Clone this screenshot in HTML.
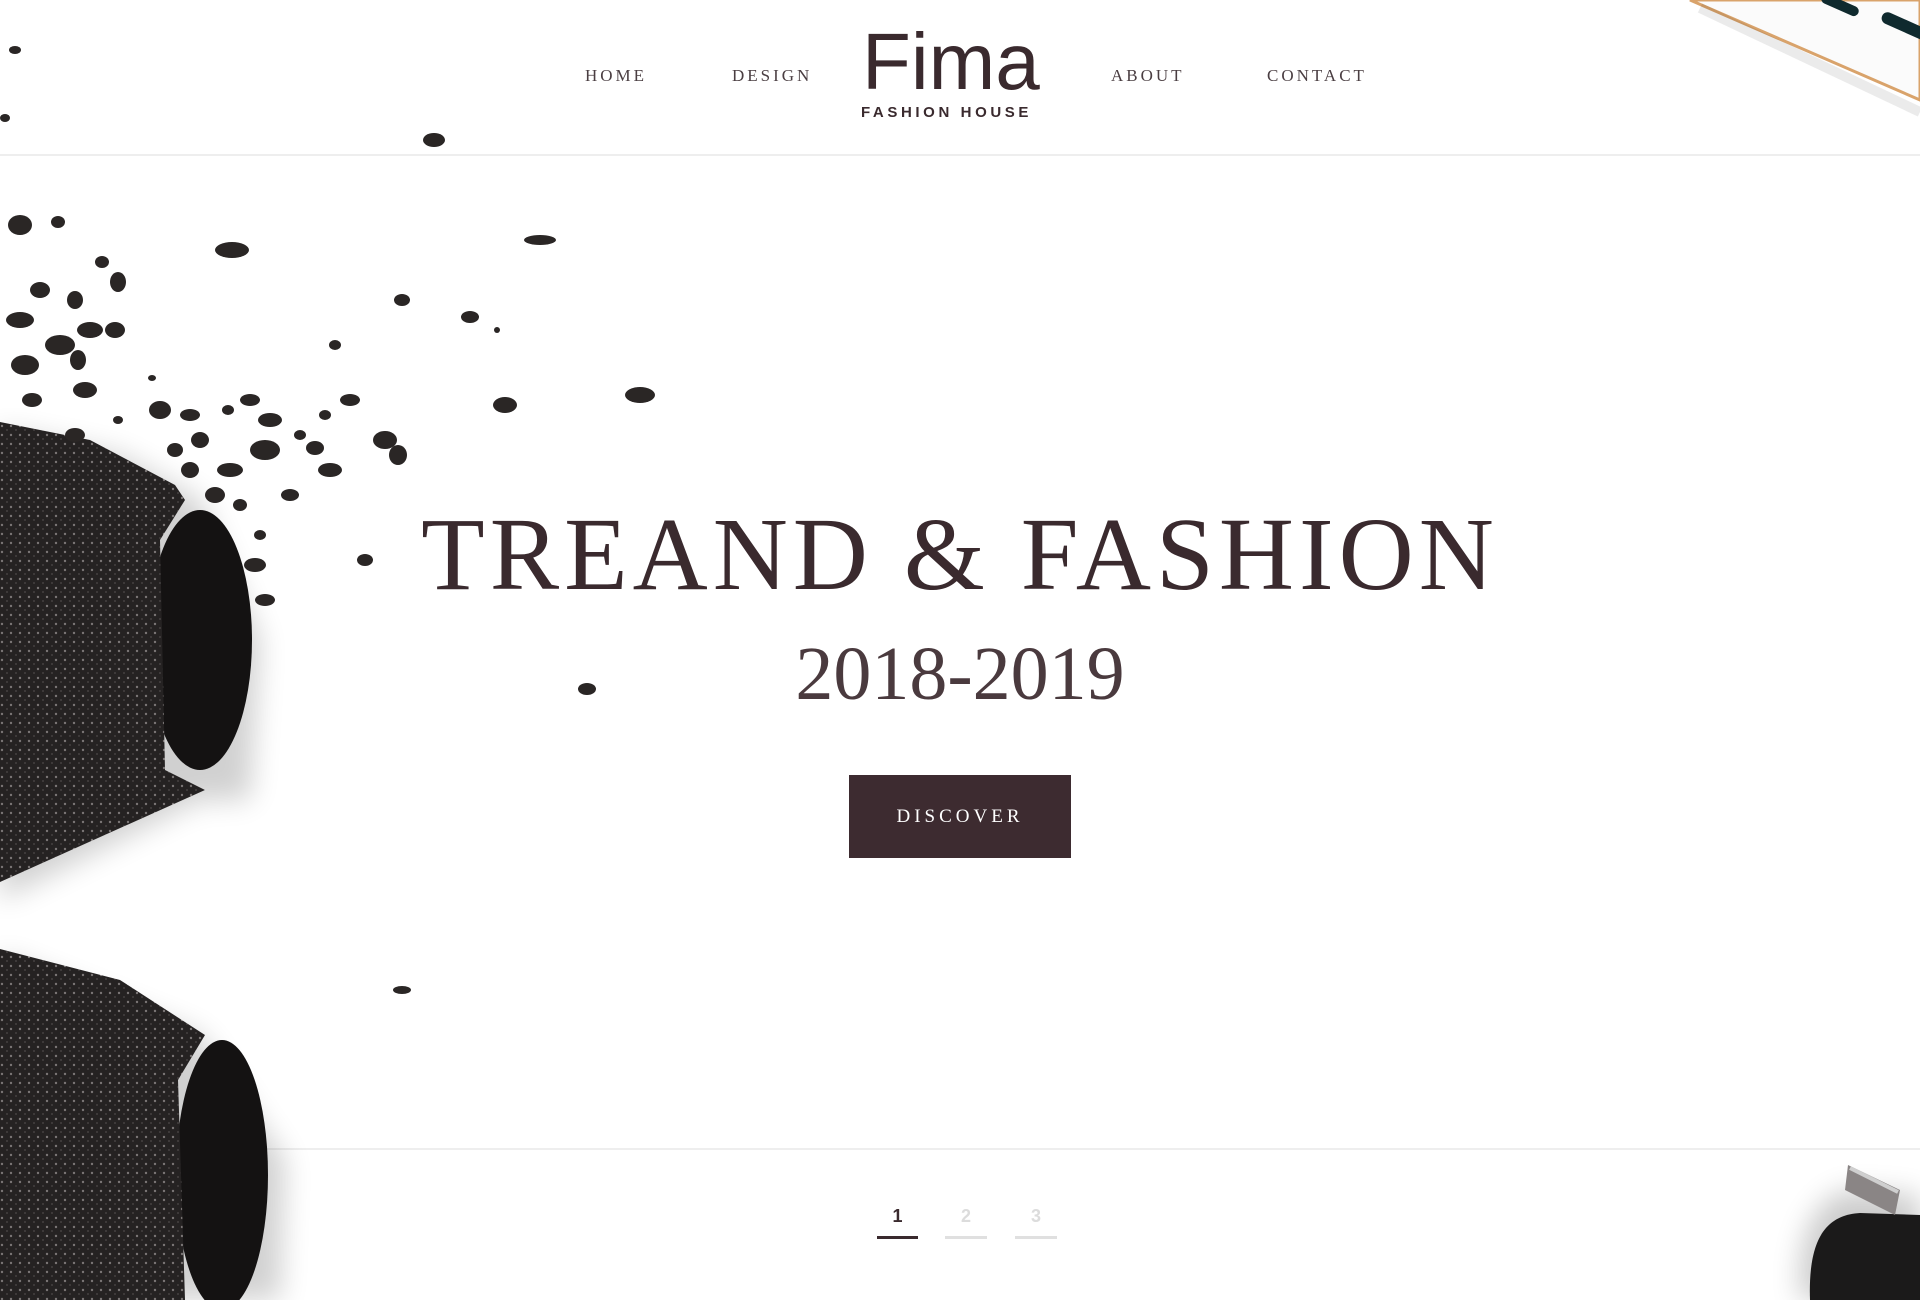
<!DOCTYPE html>
<html><head><meta charset="utf-8"><style>
html,body{margin:0;padding:0;background:#fff;}
body{width:1920px;height:1300px;position:relative;overflow:hidden;font-family:"Liberation Serif",serif;color:#3a2a2e;}
.nav{position:absolute;top:66px;font-size:17px;letter-spacing:3px;color:#4a3e42;}
.line{position:absolute;left:0;width:1920px;height:2px;background:#eeeeee;}
</style></head><body>
<div class="line" style="top:154px"></div>
<div class="line" style="top:1148px"></div>
<svg width="1920" height="1300" style="position:absolute;left:0;top:0">
<defs>
<filter id="sh" x="-50%" y="-50%" width="200%" height="200%"><feGaussianBlur stdDeviation="14"/></filter>
<pattern id="gl" width="9" height="9" patternUnits="userSpaceOnUse"><rect width="9" height="9" fill="#252222"/><circle cx="2" cy="3" r="1.2" fill="#7a7575"/><circle cx="7" cy="7" r="0.9" fill="#4e4a4a"/></pattern>
</defs>
<path d="M0,430 L120,455 L200,500 L260,640 L250,800 L200,800 L0,900Z" fill="#000" opacity=".18" filter="url(#sh)"/>
<path d="M0,955 L200,1035 L285,1160 L280,1300 L0,1300Z" fill="#000" opacity=".18" filter="url(#sh)"/>
<ellipse cx="200" cy="640" rx="52" ry="130" fill="#141212"/>
<path d="M0,422 L90,440 L175,485 L185,500 L160,540 L165,770 L205,790 L0,882Z" fill="url(#gl)"/>
<ellipse cx="222" cy="1175" rx="46" ry="135" fill="#141212"/>
<path d="M0,949 L120,980 L205,1035 L178,1080 L185,1300 L0,1300Z" fill="url(#gl)"/>
<g fill="#2a2625">
<ellipse cx="15" cy="50" rx="6" ry="4"/><ellipse cx="5" cy="118" rx="5" ry="4"/><ellipse cx="434" cy="140" rx="11" ry="7"/>
<ellipse cx="20" cy="225" rx="12" ry="10"/><ellipse cx="58" cy="222" rx="7" ry="6"/><ellipse cx="232" cy="250" rx="17" ry="8"/>
<ellipse cx="102" cy="262" rx="7" ry="6"/><ellipse cx="118" cy="282" rx="8" ry="10"/><ellipse cx="75" cy="300" rx="8" ry="9"/>
<ellipse cx="40" cy="290" rx="10" ry="8"/><ellipse cx="20" cy="320" rx="14" ry="8"/><ellipse cx="90" cy="330" rx="13" ry="8"/>
<ellipse cx="115" cy="330" rx="10" ry="8"/><ellipse cx="60" cy="345" rx="15" ry="10"/><ellipse cx="25" cy="365" rx="14" ry="10"/>
<ellipse cx="78" cy="360" rx="8" ry="10"/><ellipse cx="85" cy="390" rx="12" ry="8"/><ellipse cx="32" cy="400" rx="10" ry="7"/>
<ellipse cx="75" cy="435" rx="10" ry="7"/><ellipse cx="118" cy="420" rx="5" ry="4"/><ellipse cx="160" cy="410" rx="11" ry="9"/>
<ellipse cx="190" cy="415" rx="10" ry="6"/><ellipse cx="200" cy="440" rx="9" ry="8"/><ellipse cx="228" cy="410" rx="6" ry="5"/>
<ellipse cx="250" cy="400" rx="10" ry="6"/><ellipse cx="270" cy="420" rx="12" ry="7"/><ellipse cx="265" cy="450" rx="15" ry="10"/>
<ellipse cx="300" cy="435" rx="6" ry="5"/><ellipse cx="325" cy="415" rx="6" ry="5"/><ellipse cx="315" cy="448" rx="9" ry="7"/>
<ellipse cx="350" cy="400" rx="10" ry="6"/><ellipse cx="385" cy="440" rx="12" ry="9"/><ellipse cx="330" cy="470" rx="12" ry="7"/>
<ellipse cx="230" cy="470" rx="13" ry="7"/><ellipse cx="215" cy="495" rx="10" ry="8"/><ellipse cx="240" cy="505" rx="7" ry="6"/>
<ellipse cx="290" cy="495" rx="9" ry="6"/><ellipse cx="255" cy="565" rx="11" ry="7"/><ellipse cx="365" cy="560" rx="8" ry="6"/>
<ellipse cx="190" cy="470" rx="9" ry="8"/><ellipse cx="175" cy="450" rx="8" ry="7"/><ellipse cx="260" cy="535" rx="6" ry="5"/>
<ellipse cx="398" cy="455" rx="9" ry="10"/><ellipse cx="335" cy="345" rx="6" ry="5"/><ellipse cx="402" cy="300" rx="8" ry="6"/>
<ellipse cx="470" cy="317" rx="9" ry="6"/><ellipse cx="505" cy="405" rx="12" ry="8"/><ellipse cx="640" cy="395" rx="15" ry="8"/>
<ellipse cx="540" cy="240" rx="16" ry="5"/><ellipse cx="265" cy="600" rx="10" ry="6"/><ellipse cx="587" cy="689" rx="9" ry="6"/>
<ellipse cx="402" cy="990" rx="9" ry="4"/><ellipse cx="497" cy="330" rx="3" ry="3"/><ellipse cx="152" cy="378" rx="4" ry="3"/>
</g>
<path d="M1690,0 L1920,100 L1920,0Z" fill="#fbfbfb" stroke="#d9a36b" stroke-width="3"/>
<path d="M1700,8 L1920,112" stroke="#000" stroke-opacity=".08" stroke-width="10" fill="none"/>
<rect x="1820" y="0" width="40" height="10" rx="5" fill="#0f2a2e" transform="rotate(24 1840 5)"/>
<rect x="1880" y="20" width="50" height="12" rx="6" fill="#0f2a2e" transform="rotate(24 1905 26)"/>
<path d="M1800,1300 C1795,1230 1820,1195 1850,1190 L1920,1195 L1920,1300Z" fill="#000" opacity=".2" filter="url(#sh)"/>
<path d="M1810,1300 C1808,1240 1825,1215 1860,1213 L1920,1215 L1920,1300Z" fill="#1b1a1a"/>
<path d="M1848,1165 L1900,1190 L1895,1215 L1845,1190Z" fill="#8a8585"/>
<path d="M1850,1168 L1898,1192" stroke="#cfcfcf" stroke-width="4"/>
</svg>

<div class="nav" style="left:585px">HOME</div>
<div class="nav" style="left:732px">DESIGN</div>
<div class="nav" style="left:1111px">ABOUT</div>
<div class="nav" style="left:1267px">CONTACT</div>
<div style="position:absolute;left:862px;top:22px;font-family:'Liberation Sans',sans-serif;font-size:80px;color:#3a2a2e;letter-spacing:0px;line-height:1">Fima</div>
<div style="position:absolute;left:861px;top:104px;font-family:'Liberation Sans',sans-serif;font-size:15px;font-weight:bold;letter-spacing:3.6px;color:#3a2a2e">FASHION HOUSE</div>

<div style="position:absolute;left:0;width:1920px;top:503px;text-align:center;font-size:104px;letter-spacing:5px;line-height:1;color:#3a2a2e">TREAND &amp; FASHION</div>
<div style="position:absolute;left:0;width:1920px;top:636px;text-align:center;font-size:76px;color:#4a3a3e;line-height:1">2018-2019</div>
<div style="position:absolute;left:849px;top:775px;width:222px;height:83px;background:#3d2b30;color:#fff;font-size:19px;letter-spacing:4px;text-align:center;line-height:83px">DISCOVER</div>

<div style="position:absolute;left:877px;top:1206px;width:41px;text-align:center;font-family:'Liberation Sans',sans-serif;font-weight:bold;font-size:18px;color:#3a2a2e">1</div>
<div style="position:absolute;left:945px;top:1206px;width:42px;text-align:center;font-family:'Liberation Sans',sans-serif;font-weight:bold;font-size:18px;color:#dcdcdc">2</div>
<div style="position:absolute;left:1015px;top:1206px;width:42px;text-align:center;font-family:'Liberation Sans',sans-serif;font-weight:bold;font-size:18px;color:#dcdcdc">3</div>
<div style="position:absolute;left:877px;top:1236px;width:41px;height:3px;background:#3a2a2e"></div>
<div style="position:absolute;left:945px;top:1236px;width:42px;height:3px;background:#e0e0e0"></div>
<div style="position:absolute;left:1015px;top:1236px;width:42px;height:3px;background:#e0e0e0"></div>
</body></html>
